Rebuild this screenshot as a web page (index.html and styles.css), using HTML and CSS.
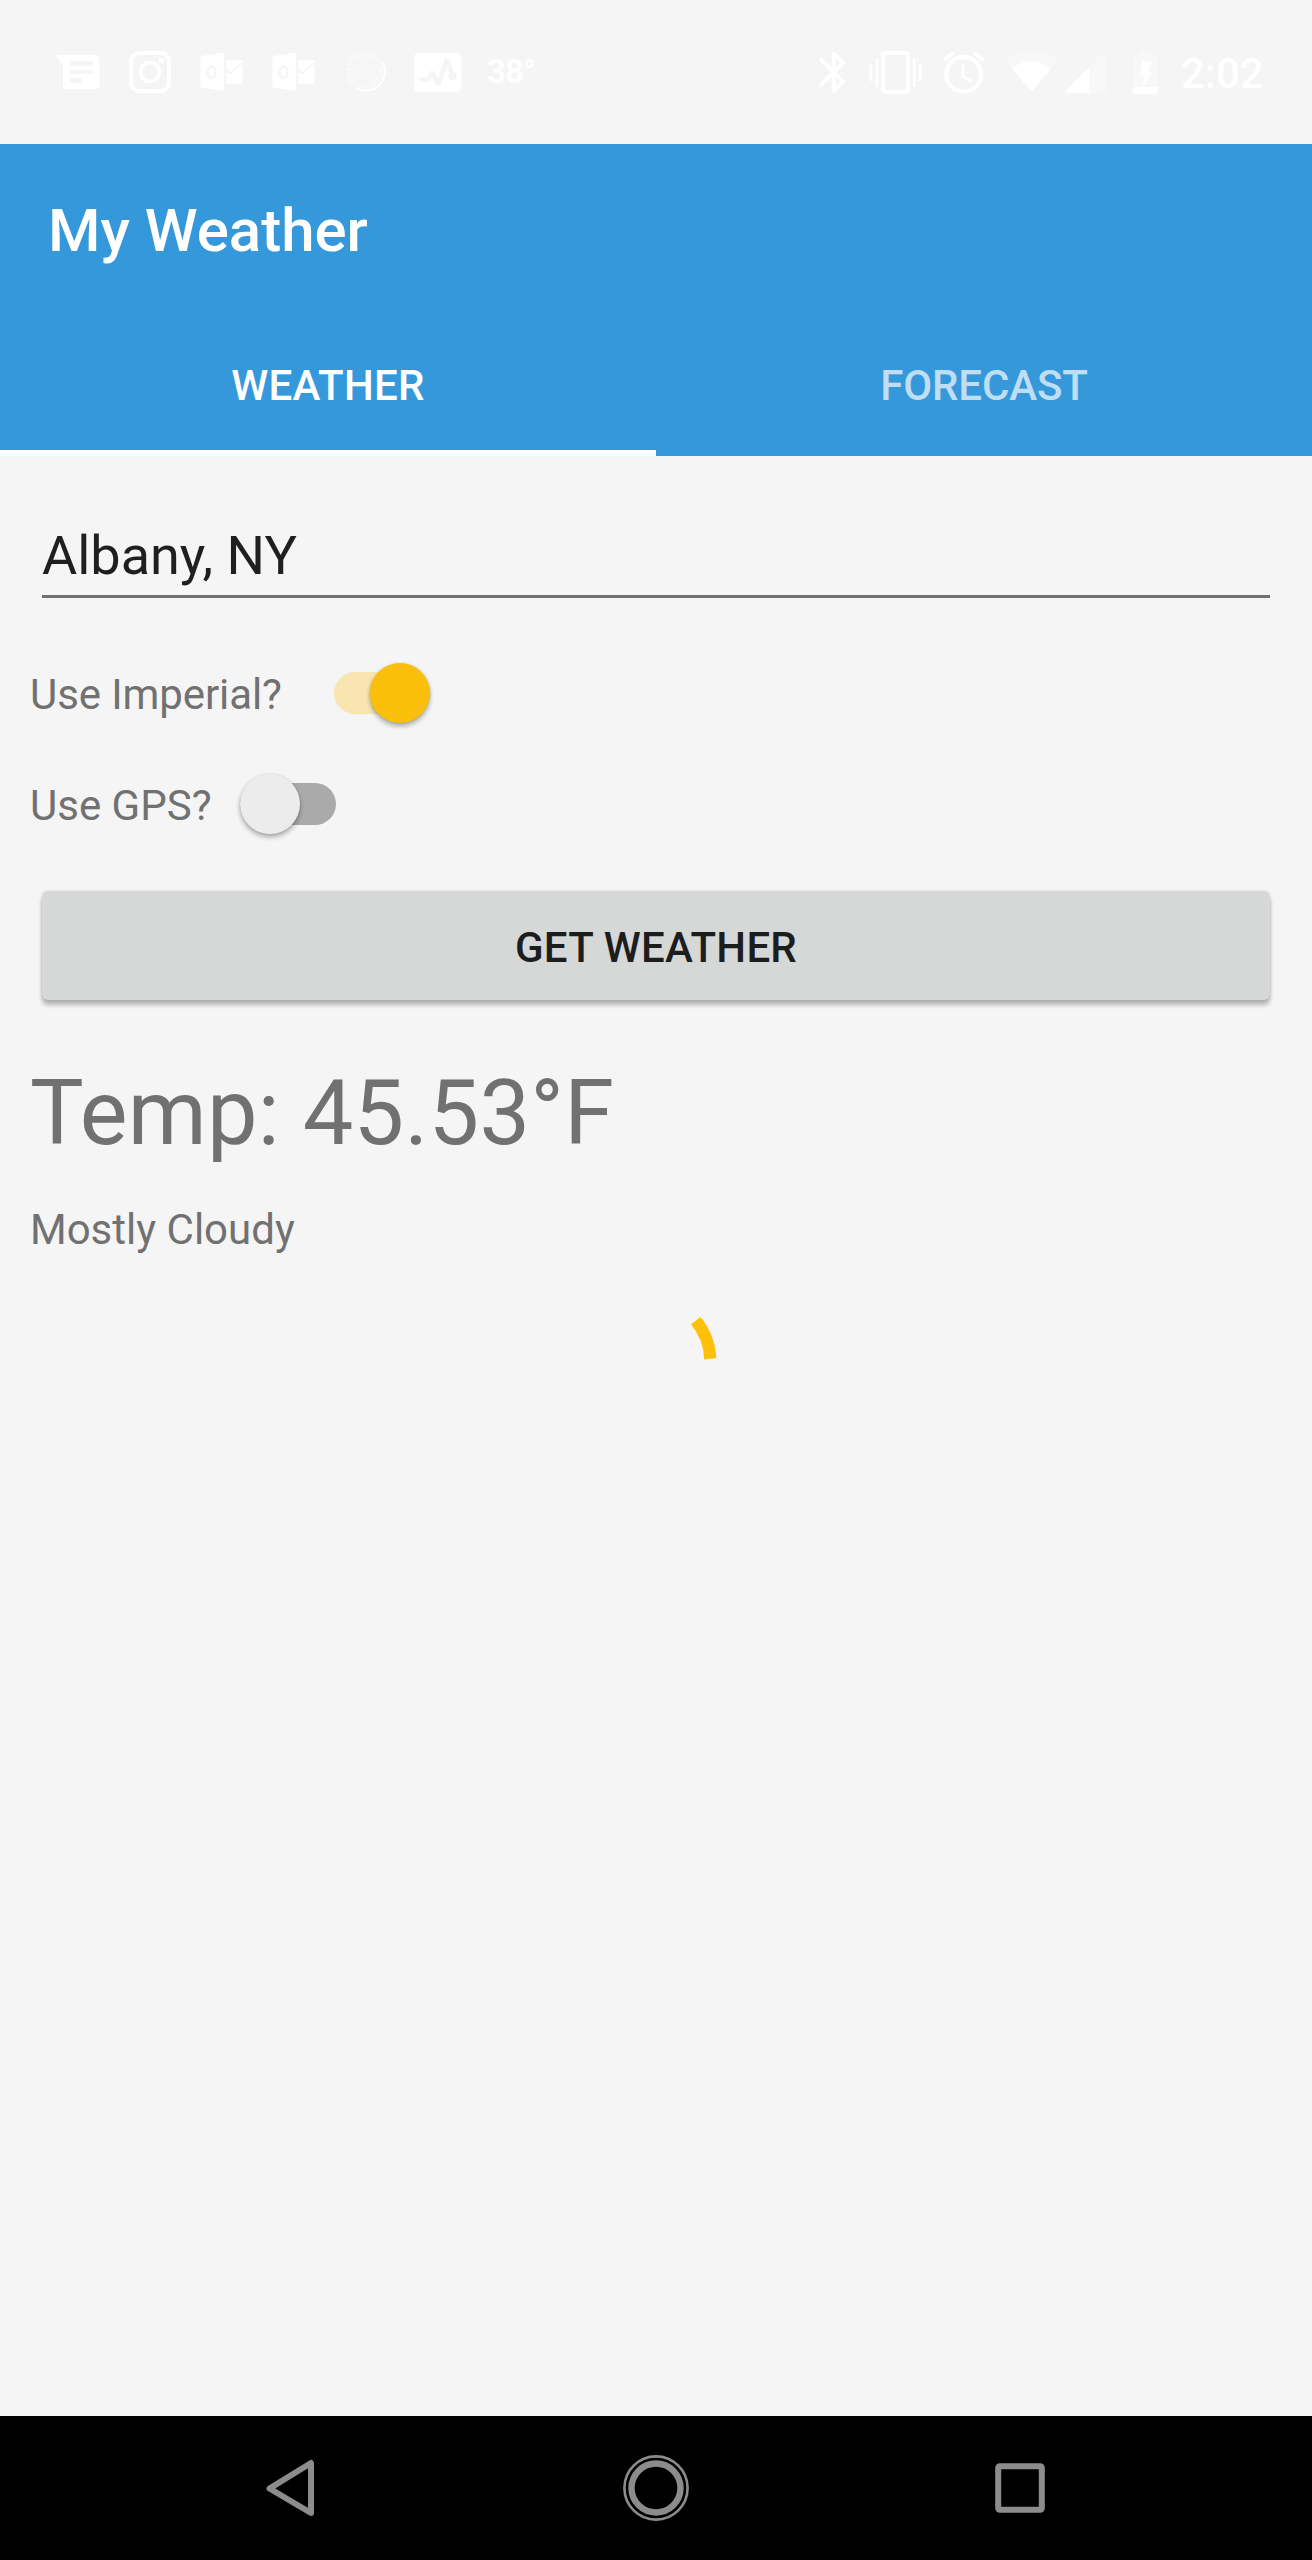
FILE: index.html
```html
<!DOCTYPE html>
<html lang="en">
<head>
<meta charset="utf-8">
<title>My Weather</title>
<link rel="stylesheet" href="styles.css">
</head>
<body>
<div class="screen">
  <div class="status">
    <div class="status-left">
      <svg class="icon" width="72" height="72" viewBox="6 18 216 216"><path fill-rule="evenodd" d="M52 75H165Q178 75 178 88V165Q178 178 165 178H82Q69 178 69 165V105L52 83Q48 75 52 75ZM89 93V107H159V93ZM89 119V132H159V119ZM89 145V158H126V145Z"/></svg>
      <svg class="icon line" width="72" height="72" viewBox="222 18 216 216"><rect x="273" y="69" width="114" height="114" rx="26" stroke-width="12"/><circle cx="330" cy="126" r="28" stroke-width="11"/><circle class="solid" cx="364" cy="92" r="8"/></svg>
      <svg class="icon" width="72" height="72" viewBox="438 18 216 216"><path fill-rule="evenodd" d="M481 79L553 67V184L481 172ZM515 106C506 106 500 115 500 127S506 148 515 148S530 139 530 127S524 106 515 106ZM515 113C520 113 523 119 523 127S520 141 515 141S507 135 507 127S510 113 515 113Z"/><path d="M559 91H607V95L570 125L559 117ZM559 124L570 132L607 102V161H559Z"/></svg>
      <svg class="icon" width="72" height="72" viewBox="438 18 216 216"><path fill-rule="evenodd" d="M481 79L553 67V184L481 172ZM515 106C506 106 500 115 500 127S506 148 515 148S530 139 530 127S524 106 515 106ZM515 113C520 113 523 119 523 127S520 141 515 141S507 135 507 127S510 113 515 113Z"/><path d="M559 91H607V95L570 125L559 117ZM559 124L570 132L607 102V161H559Z"/></svg>
      <svg class="icon line" width="72" height="72" viewBox="120 18 216 216"><circle class="solid" cx="226" cy="124" r="62" opacity=".18"/><circle cx="223" cy="121" r="48" stroke-width="18" stroke-dasharray="7 5.57" opacity=".4"/><path d="M278 97A58 58 0 0 1 203 177" stroke-width="6" stroke-linecap="round"/></svg>
      <svg class="icon" width="72" height="72" viewBox="336 18 216 216"><rect x="373" y="68" width="142" height="117" rx="13"/><path class="cut" d="M389 149H415L426 126L445 164L471 88L487 136" stroke-width="13" stroke-linejoin="bevel"/><circle class="cut-dot" cx="488" cy="139" r="12"/></svg>
      <span class="outside">38°</span>
    </div>
    <div class="status-right">
      <svg class="icon line" width="64" height="72" viewBox="0 18 192 216"><path d="M64 90L129 155L101 183V71L129 99L64 164" stroke-width="12" stroke-linecap="round" stroke-linejoin="round"/></svg>
      <svg class="icon line" width="64" height="72" viewBox="192 18 192 216"><rect x="249" y="69" width="75" height="116" rx="8" stroke-width="12"/><path d="M231 88V167M343 88V167M213 105V150M361 105V150" stroke-width="8" stroke-linecap="round"/></svg>
      <svg class="icon line" width="68" height="72" viewBox="384 18 204 216"><circle cx="491" cy="133" r="52" stroke-width="13"/><path d="M436 88L456 71M546 88L526 71" stroke-width="12" stroke-linecap="round"/><path d="M489 106V139L513 153" stroke-width="8" stroke-linecap="round"/></svg>
      <svg class="icon" width="64" height="72" viewBox="588 18 192 216"><path opacity=".3" d="M620 95Q616 91 620 87Q694 35 769 87Q773 91 769 95L751 116L637 116Z"/><path d="M637 116Q694 70 752 116L700 179Q694 186 689 179Z"/></svg>
      <svg class="icon" width="55" height="72" viewBox="60 18 165 216"><path opacity=".3" d="M147 111L189 69Q198 64 198 74V182Q198 189 191 189H147Z"/><path d="M147 111V189H83Q74 188 80 179Z"/></svg>
      <svg class="icon" width="60" height="72" viewBox="225 18 180 216"><path opacity=".3" d="M301 60H333V75H347Q354 75 354 82V171H279V82Q279 75 286 75H301Z"/><path d="M279 171H354V185Q354 192 347 192H286Q279 192 279 185ZM307 94H334L325 126H337L307 171L313 135H301Z"/></svg>
      <span class="clock">2:02</span>
    </div>
  </div>
  <header class="header">
    <h1 class="title">My Weather</h1>
    <nav class="tabs">
      <span class="tab active">WEATHER</span>
      <span class="tab">FORECAST</span>
    </nav>
  </header>
  <main class="content">
    <div class="field">Albany, NY</div>
    <div class="option imperial"><span class="label">Use Imperial?</span><span class="switch on"><span class="thumb"></span></span></div>
    <div class="option gps"><span class="label">Use GPS?</span><span class="switch"><span class="thumb"></span></span></div>
    <button class="button">GET WEATHER</button>
    <div class="temp">Temp: 45.53°F</div>
    <div class="summary">Mostly Cloudy</div>
    <svg class="spinner" width="144" height="144" viewBox="584 1288 144 144"><path d="M691 1324.3L700.5 1317A70 70 0 0 1 716.3 1358L704.2 1359.5A58 58 0 0 0 691 1324.3Z"/></svg>
  </main>
  <div class="navbar">
    <svg width="96" height="96" viewBox="242 2440 96 96"><path d="M311 2463V2513L269.5 2488.5Z" stroke-width="6" stroke-linejoin="round"/></svg>
    <svg width="96" height="96" viewBox="608 2440 96 96"><circle cx="656" cy="2488" r="31.6" stroke-width="2.6"/><circle cx="656" cy="2488" r="24.5" stroke-width="6.4"/></svg>
    <svg width="96" height="96" viewBox="974 2440 96 96"><rect x="998.2" y="2466.2" width="43.6" height="43.6" rx="1.5" stroke-width="6"/></svg>
  </div>
</div>
</body>
</html>
```
FILE: styles.css
```css
body {
  margin: 0;
  background: #f5f5f5;
  font-family: Roboto, "Liberation Sans", sans-serif;
}
.screen {
  width: 1312px;
  height: 2560px;
  display: flex;
  flex-direction: column;
  overflow: hidden;
}
.status {
  height: 144px;
  flex: none;
  display: flex;
  justify-content: space-between;
  align-items: center;
  box-sizing: border-box;
  padding: 0 49px 0 42px;
  color: #fff;
  font-weight: 500;
}
.status-left, .status-right {
  display: flex;
  align-items: center;
}
.icon { fill: #fff; flex: none; }
.line { fill: none; stroke: #fff; }
.solid { fill: #fff; stroke: none; }
.cut { fill: none; stroke: #f5f5f5; }
.cut-dot { fill: #f5f5f5; }
.outside {
  font-size: 33px;
  font-weight: 700;
  line-height: 40px;
  margin-left: 13px;
  letter-spacing: -.9px;
}
.clock {
  width: 82px;
  margin-left: 6px;
  font-size: 42px;
  line-height: 50px;
  padding-top: 3px;
}
.header {
  height: 312px;
  flex: none;
  background: #3598db;
  color: #fff;
}
.title {
  margin: 0;
  height: 168px;
  box-sizing: border-box;
  padding: 5px 0 0 48px;
  font-size: 60px;
  line-height: 163px;
  font-weight: 500;
}
.tabs {
  display: grid;
  grid-template-columns: 1fr 1fr;
  height: 144px;
}
.tab {
  box-sizing: border-box;
  padding-top: 4px;
  border-bottom: 6px solid transparent;
  line-height: 140px;
  height: 144px;
  text-align: center;
  font-size: 42px;
  font-weight: 500;
  letter-spacing: -.1px;
  color: rgba(255, 255, 255, .7);
}
.tab.active {
  color: #fff;
  letter-spacing: .25px;
  border-bottom-color: #fff;
}
.content {
  flex: 1;
  display: flex;
  flex-direction: column;
  padding: 68px 30px 0;
  color: #717171;
  font-size: 42px;
}
.field {
  margin: 0 12px;
  padding-bottom: 8px;
  border-bottom: 3px solid #717171;
  font-size: 54px;
  line-height: 63px;
  color: #1f1f1f;
}
.option {
  height: 60px;
  display: flex;
  align-items: center;
}
.label {
  flex: none;
  padding-top: 3px;
}
.imperial { margin-top: 65px; }
.imperial .label {
  width: 304px;
  letter-spacing: -.1px;
}
.gps { margin-top: 51px; }
.gps .label { width: 210px; }
.switch {
  width: 96px;
  height: 42px;
  border-radius: 21px;
  background: #aaa;
  display: flex;
  align-items: center;
}
.switch.on {
  width: 95.5px;
  background: #f8e5af;
  justify-content: flex-end;
}
.thumb {
  flex: none;
  width: 60px;
  height: 60px;
  border-radius: 50%;
  background: #ececec;
  box-shadow: 0 3px 5px rgba(0, 0, 0, .32), 0 0 2px rgba(0, 0, 0, .1);
}
.on .thumb { background: #fabf0a; }
.button {
  margin: 57px 12px 0;
  height: 109px;
  padding: 4px 0 0;
  border: 0;
  border-radius: 6px;
  background: #d6d8d7;
  box-shadow: 0 5px 4px rgba(0, 0, 0, .26), 0 0 3px rgba(0, 0, 0, .12);
  color: #1c1d1d;
  font: 500 42px Roboto, "Liberation Sans", sans-serif;
  letter-spacing: .25px;
}
.temp {
  margin-top: 61px;
  font-size: 90px;
  line-height: 106px;
  letter-spacing: .33px;
}
.summary {
  margin-top: 38px;
  line-height: 50px;
}
.spinner {
  margin-top: 33px;
  align-self: center;
  fill: #ffc107;
}
.navbar {
  height: 144px;
  flex: none;
  box-sizing: border-box;
  padding: 0 242px;
  display: flex;
  justify-content: space-between;
  align-items: center;
  background: #000;
  fill: none;
  stroke: #8c8c8c;
}
```
